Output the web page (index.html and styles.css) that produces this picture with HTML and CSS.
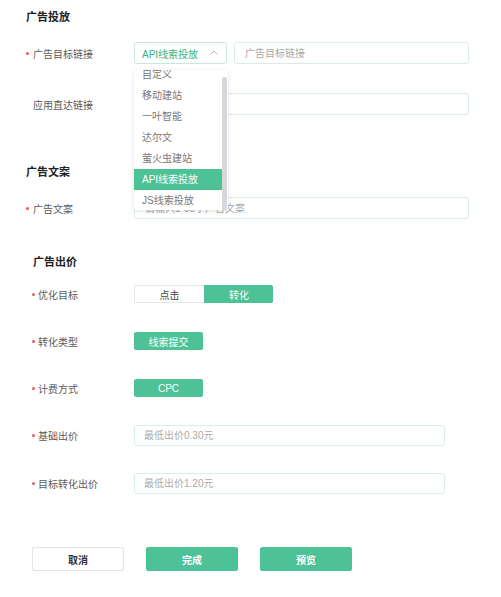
FILE: index.html
```html
<!DOCTYPE html>
<html lang="zh-CN">
<head>
    <meta charset="UTF-8">
    <meta name="viewport" content="width=device-width, initial-scale=1.0">
    <title>广告设置</title>
    <link rel="stylesheet" href="styles.css">
</head>
<body>
    <div class="page">
        <!-- 广告投放 -->
        <div class="section">
            <div class="section-title">广告投放</div>

            <div class="form-row first">
                <div class="form-label req">广告目标链接</div>
                <div class="form-control">
                    <div class="select-wrap">
                        <div class="select is-open">
                            <span class="select-value">API线索投放</span>
                            <svg class="select-arrow" width="8" height="5" viewBox="0 0 8 5" fill="none">
                                <path d="M0.5 4.5L4 1L7.5 4.5" stroke="#b5b5b5" stroke-width="1"/>
                            </svg>
                        </div>
                        <!-- 下拉菜单 -->
                        <div class="dropdown">
                            <ul class="dropdown-list">
                                <li>自定义</li>
                                <li>移动建站</li>
                                <li>一叶智能</li>
                                <li>达尔文</li>
                                <li>萤火虫建站</li>
                                <li class="active">API线索投放</li>
                                <li>JS线索投放</li>
                            </ul>
                            <div class="dropdown-scroll"></div>
                        </div>
                    </div>
                    <input type="text" class="input grow" placeholder="广告目标链接">
                </div>
            </div>

            <div class="form-row gap-l">
                <div class="form-label">应用直达链接</div>
                <div class="form-control">
                    <input type="text" class="input grow">
                </div>
            </div>
        </div>

        <!-- 广告文案 -->
        <div class="section section-copy">
            <div class="section-title">广告文案</div>
            <div class="form-row first">
                <div class="form-label req">广告文案</div>
                <div class="form-control">
                    <input type="text" class="input grow" placeholder="请输入1-30字广告文案">
                </div>
            </div>
        </div>

        <!-- 广告出价 -->
        <div class="section section-bid">
            <div class="section-title">广告出价</div>

            <div class="form-row tight">
                <div class="form-label req">优化目标</div>
                <div class="form-control">
                    <div class="segmented">
                        <div class="seg-item">点击</div>
                        <div class="seg-item on">转化</div>
                    </div>
                </div>
            </div>

            <div class="form-row gap-l">
                <div class="form-label req">转化类型</div>
                <div class="form-control">
                    <div class="tag-btn">线索提交</div>
                </div>
            </div>

            <div class="form-row gap-l">
                <div class="form-label req">计费方式</div>
                <div class="form-control">
                    <div class="tag-btn">CPC</div>
                </div>
            </div>

            <div class="form-row gap-m">
                <div class="form-label req">基础出价</div>
                <div class="form-control">
                    <input type="text" class="input short" placeholder="最低出价0.30元">
                </div>
            </div>

            <div class="form-row gap-s">
                <div class="form-label req">目标转化出价</div>
                <div class="form-control">
                    <input type="text" class="input short" placeholder="最低出价1.20元">
                </div>
            </div>
        </div>

        <!-- 底部按钮 -->
        <div class="actions">
            <button class="btn btn-default">取消</button>
            <button class="btn btn-primary">完成</button>
            <button class="btn btn-primary">预览</button>
        </div>
    </div>
</body>
</html>
```

FILE: styles.css
```css
* {
    margin: 0;
    padding: 0;
    box-sizing: border-box;
    font-family: 'Liberation Sans', 'Noto Sans CJK SC', Arial, sans-serif;
}

body {
    background-color: #fff;
    color: #333;
}

.page {
    width: 501px;
    padding-top: 9px;
}

.section {
    padding-left: 26px;
    padding-right: 32px;
}

.section-title {
    font-size: 11px;
    font-weight: 700;
    line-height: 16px;
    color: #222;
}

.section-copy {
    margin-top: 49px;
}

.section-bid {
    margin-top: 35px;
    padding-left: 32px;
}

.section-bid .section-title {
    padding-left: 1px;
}

.form-row {
    display: flex;
    align-items: center;
    margin-top: 29px;
}

.form-row.first {
    margin-top: 17px;
}

.form-row.tight {
    margin-top: 15px;
}

.form-row.gap-l {
    margin-top: 29px;
}

.form-row.gap-m {
    margin-top: 28px;
}

.form-row.gap-s {
    margin-top: 27px;
}

.form-label {
    width: 108px;
    flex-shrink: 0;
    padding-left: 7px;
    font-size: 10px;
    color: #5a5a5a;
    display: flex;
    align-items: center;
}

.section-bid .form-label {
    width: 102px;
    padding-left: 6px;
}

.form-label.req::before {
    content: "";
    width: 3px;
    height: 3px;
    border-radius: 50%;
    background-color: #f0565d;
    margin-left: -7px;
    margin-right: 4px;
}

.section-bid .form-label.req::before {
    margin-left: -6px;
    margin-right: 3px;
}

.form-control {
    flex: 1;
    display: flex;
    align-items: center;
    gap: 7px;
}

.input {
    height: 22px;
    border: 1px solid #d9ede6;
    border-radius: 3px;
    padding: 0 10px;
    font-size: 10px;
    color: #333;
    outline: none;
    background: #fff;
}

.input::placeholder {
    color: #a9a9a9;
}

.input.grow {
    flex: 1;
}

.input.short {
    width: 311px;
    height: 21px;
    padding-left: 9px;
}

/* 下拉选择 */
.select-wrap {
    position: relative;
}

.select {
    width: 93px;
    height: 22px;
    border: 1px solid #c8e8dc;
    border-radius: 3px;
    display: flex;
    align-items: center;
    justify-content: space-between;
    padding: 0 8px 0 7px;
    font-size: 10px;
    color: #37b27f;
}

.select-arrow {
    margin-bottom: 1px;
}

.dropdown {
    position: absolute;
    top: 28px;
    left: 0;
    width: 94px;
    height: 140px;
    background: #fff;
    border-radius: 2px;
    box-shadow: 0 1px 5px rgba(0,0,0,0.12);
    overflow: hidden;
    z-index: 10;
}

.dropdown-list {
    list-style: none;
    width: 88px;
    margin-top: -6px;
}

.dropdown-list li {
    height: 21px;
    line-height: 21px;
    padding-left: 8px;
    font-size: 10px;
    color: #777;
}

.dropdown-list li.active {
    background-color: #4cc296;
    color: #fff;
}

.dropdown-scroll {
    position: absolute;
    top: 7px;
    right: 1px;
    width: 5px;
    bottom: 0;
    background-color: #d7d6dc;
    border-radius: 3px 3px 0 0;
}

/* 优化目标切换 */
.segmented {
    display: flex;
    height: 18px;
}

.seg-item {
    width: 70px;
    display: flex;
    align-items: center;
    justify-content: center;
    font-size: 10px;
    color: #444;
    border: 1px solid #e6e6e6;
    border-right: none;
    border-radius: 2px 0 0 2px;
}

.seg-item.on {
    width: 69px;
    background-color: #4cc296;
    border-color: #4cc296;
    color: #fff;
    border-radius: 0 2px 2px 0;
}

.tag-btn {
    width: 69px;
    height: 18px;
    display: flex;
    align-items: center;
    justify-content: center;
    background-color: #4cc296;
    color: #fff;
    font-size: 10px;
    border-radius: 2px;
}

/* 底部操作 */
.actions {
    display: flex;
    gap: 22px;
    padding-left: 32px;
    margin-top: 53px;
    padding-bottom: 28px;
}

.btn {
    width: 92px;
    height: 24px;
    border-radius: 2px;
    font-size: 10px;
    font-weight: 700;
    border: 1px solid #e4e4e4;
    background: #fff;
    color: #333;
}

.btn-primary {
    background-color: #4cc296;
    border-color: #4cc296;
    color: #fff;
}
```
